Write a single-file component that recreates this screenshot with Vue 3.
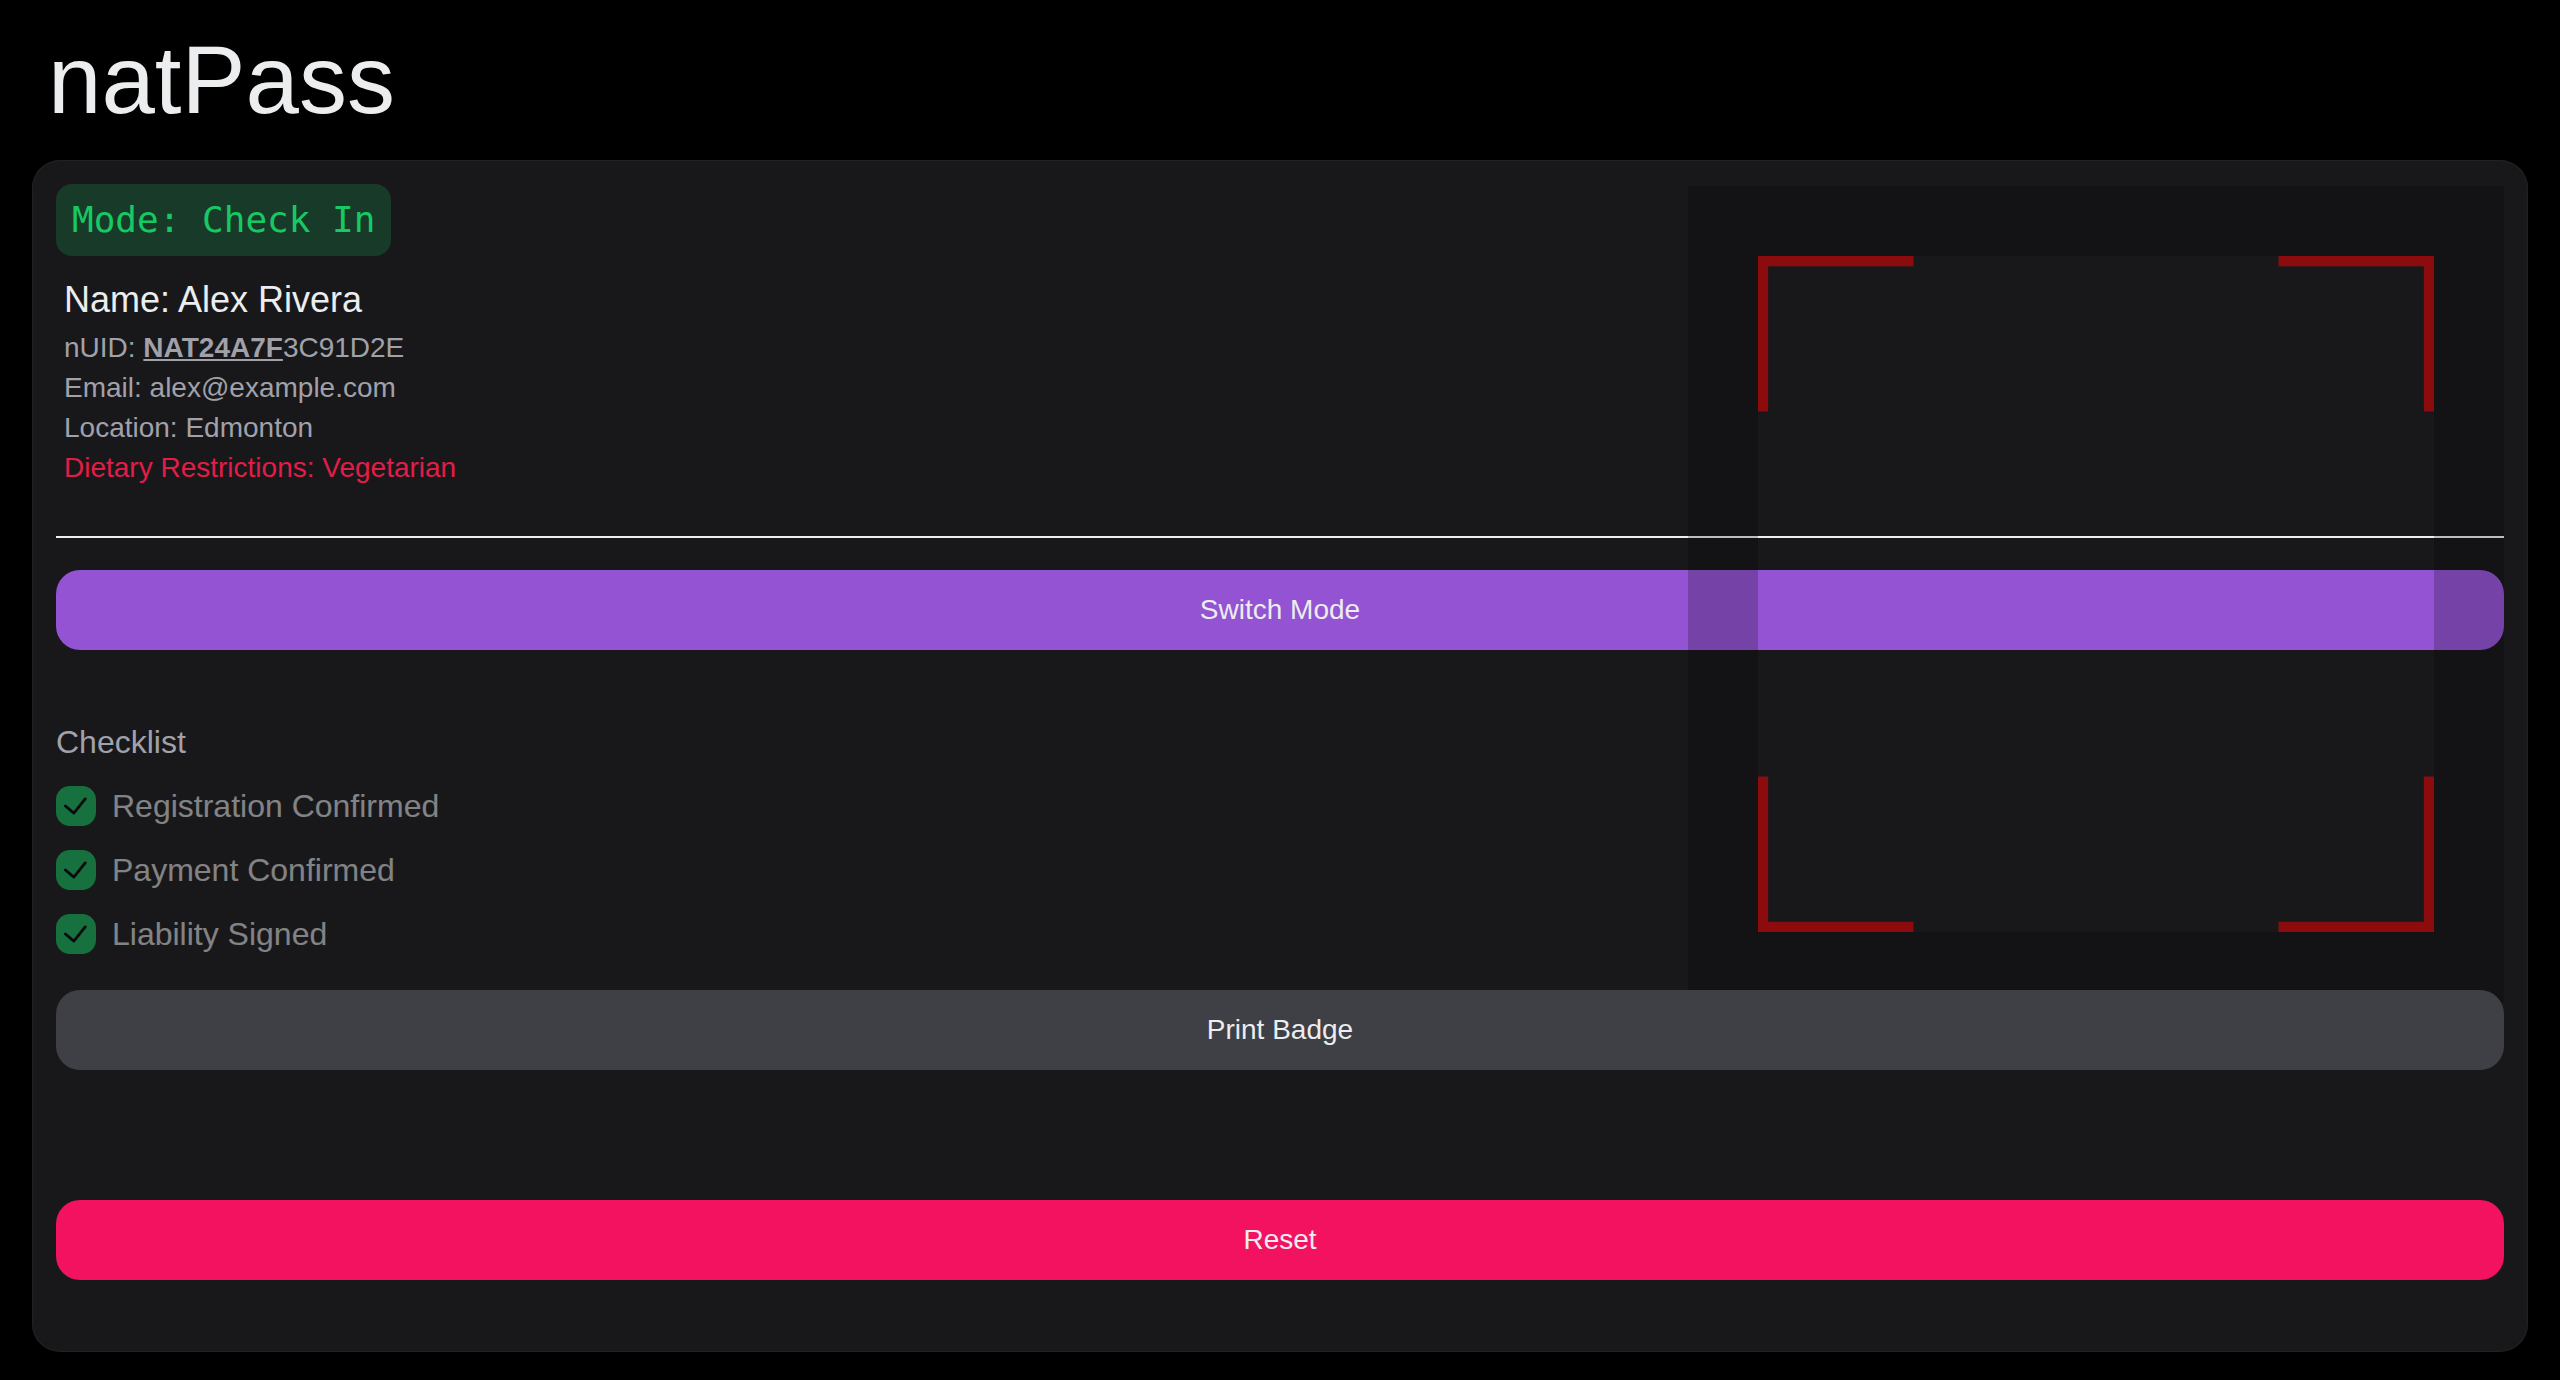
<script setup>
import { ref } from 'vue'

const mode = ref('Check In')
const attendee = {
  name: 'Alex Rivera',
  idPrefix: 'NAT24A7F',
  idRest: '3C91D2E',
  email: 'alex@example.com',
  location: 'Edmonton',
  diet: 'Vegetarian',
}
const checklist = ref([
  { id: 'registration', label: 'Registration Confirmed', done: true },
  { id: 'payment', label: 'Payment Confirmed', done: true },
  { id: 'liability', label: 'Liability Signed', done: true },
])
</script>

<template>
  <div class="page">
    <header class="header">
      <h1>natPass</h1>
    </header>

    <main class="card">
      <div class="mode">Mode: {{ mode }}</div>

      <section class="details">
        <h2>Name: {{ attendee.name }}</h2>
        <p>nUID: <strong>{{ attendee.idPrefix }}</strong>{{ attendee.idRest }}</p>
        <p>Email: {{ attendee.email }}</p>
        <p>Location: {{ attendee.location }}</p>
        <p class="diet">Dietary Restrictions: {{ attendee.diet }}</p>
      </section>

      <hr class="divider" />

      <button type="button" class="btn secondary">Switch Mode</button>

      <fieldset class="checklist">
        <legend>Checklist</legend>
        <label v-for="item in checklist" :key="item.id" class="item" :for="item.id">
          <span class="box">
            <input :id="item.id" v-model="item.done" type="checkbox" disabled />
            <svg v-if="item.done" viewBox="0 0 17 18" aria-hidden="true">
              <polyline points="1 9 7 14 15 4" />
            </svg>
          </span>
          <span>{{ item.label }}</span>
        </label>
      </fieldset>

      <button type="button" class="btn neutral">Print Badge</button>
      <button type="button" class="btn danger">Reset</button>

      <!-- Viewfinder of the badge scanner, laid over the card -->
      <div class="scanner" aria-hidden="true">
        <svg viewBox="0 0 100 100">
          <path d="M23,0 L0,0 L0,23" />
          <path d="M0,77 L0,100 L23,100" />
          <path d="M77,100 L100,100 L100,77" />
          <path d="M100,23 L100,0 L77,0" />
        </svg>
      </div>
    </main>
  </div>
</template>

<style>
body {
  background: #000;
}
</style>

<style scoped>
.page {
  padding: 32px;
  background: #000;
  color: #ecedee;
  font-family: "Liberation Sans", Arial, sans-serif;
}

.header {
  padding: 0 16px 32px;
}

h1,
h2,
p {
  margin: 0;
  font-weight: 400;
}

h1 {
  font-size: 96px;
  line-height: 96px;
}

.card {
  position: relative;
  display: flex;
  flex-direction: column;
  padding: 24px 24px 72px;
  border-radius: 28px;
  background: #18181b;
  box-shadow: inset 0 0 2px rgba(255, 255, 255, 0.15);
}

.mode {
  align-self: flex-start;
  padding: 8px 16px;
  border-radius: 16px;
  background: rgba(23, 201, 100, 0.2);
  color: #17c964;
  font-family: "DejaVu Sans Mono", monospace;
  font-size: 36px;
  line-height: 56px;
}

.details {
  margin-top: 16px;
  padding: 0 8px;
  color: #a1a1aa;
  font-size: 28px;
  line-height: 40px;
}

.details h2 {
  color: #ecedee;
  font-size: 36px;
  line-height: 56px;
}

.details strong {
  text-decoration: underline;
}

.details .diet {
  color: #e11d48;
}

.divider {
  width: 100%;
  height: 2px;
  margin: 48px 0 32px;
  border: 0;
  background: #ecedee;
}

.btn {
  height: 80px;
  padding: 0 32px;
  border: 0;
  border-radius: 24px;
  color: #ecedee;
  font-family: inherit;
  font-size: 28px;
  line-height: 40px;
  cursor: pointer;
}

.secondary {
  background: #9353d3;
}

.neutral {
  z-index: 2;
  margin-top: 32px;
  background: #3f3f46;
}

.danger {
  margin-top: 130px;
  background: #f31260;
}

.checklist {
  display: flex;
  flex-direction: column;
  gap: 16px;
  min-width: 0;
  margin: 68px 0 0;
  padding: 0;
  border: 0;
  font-size: 32px;
  line-height: 48px;
}

.checklist legend {
  padding: 0 0 16px;
  color: #a1a1aa;
}

.item {
  display: flex;
  align-items: center;
  align-self: flex-start;
  gap: 16px;
  opacity: 0.5;
}

.box {
  display: grid;
  place-items: center;
}

.box > * {
  grid-area: 1 / 1;
}

.box input {
  appearance: none;
  width: 40px;
  height: 40px;
  margin: 0;
  border: 4px solid #3f3f46;
  border-radius: 14px;
}

.box input:checked {
  border: 0;
  background: #17c964;
}

.box svg {
  width: 24px;
  height: 26px;
  fill: none;
  stroke: #000;
  stroke-width: 2;
  stroke-linecap: round;
  stroke-linejoin: round;
}

.scanner {
  position: absolute;
  z-index: 1;
  top: 26px;
  right: 24px;
  box-sizing: border-box;
  width: calc((100% - 48px) / 3);
  aspect-ratio: 1;
  border: 70px solid rgba(0, 0, 0, 0.2);
  pointer-events: none;
}

.scanner svg {
  display: block;
  width: 100%;
  height: 100%;
  fill: none;
  stroke: rgba(255, 0, 0, 0.5);
  stroke-width: 3;
}
</style>
